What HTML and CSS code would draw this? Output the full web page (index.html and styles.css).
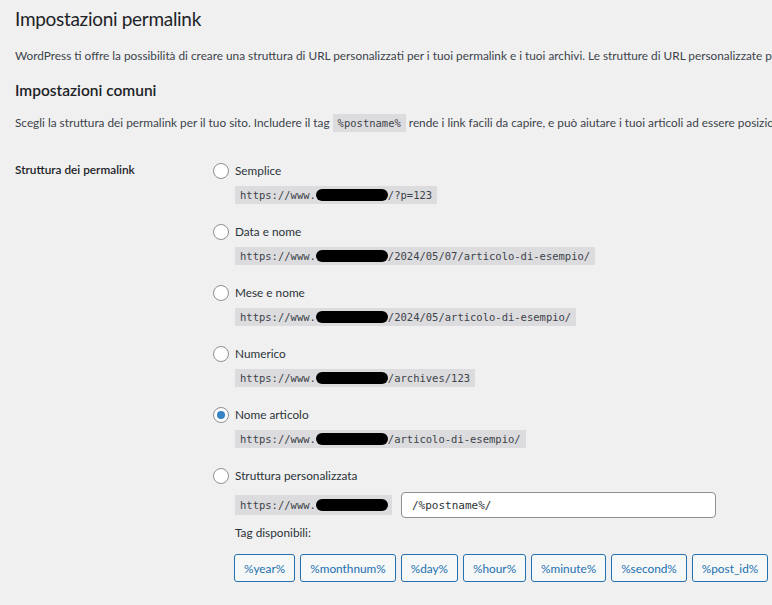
FILE: index.html
```html
<!DOCTYPE html>
<html lang="it">
<head>
    <meta charset="UTF-8">
    <meta name="viewport" content="width=device-width, initial-scale=1.0">
    <title>Impostazioni permalink</title>
    <link rel="stylesheet" href="styles.css">
</head>
<body>
    <div class="wrap">
        <h1>Impostazioni permalink</h1>
        <p class="intro">WordPress ti offre la possibilità di creare una struttura di URL personalizzati per i tuoi permalink e i tuoi archivi. Le strutture di URL personalizzate possono migliorare l'estetica, l'usabilità e la compatibilità dei tuoi link.</p>

        <h2>Impostazioni comuni</h2>
        <p class="lead">Scegli la struttura dei permalink per il tuo sito. Includere il tag <code>%postname%</code> rende i link facili da capire, e può aiutare i tuoi articoli ad essere posizionati meglio nei motori di ricerca.</p>

        <div class="form-row">
            <div class="row-title">Struttura dei permalink</div>
            <div class="options">
                <div class="option">
                    <label class="choice"><span class="radio"></span>Semplice</label>
                    <code class="sample">https://www.<span class="mask"></span>/?p=123</code>
                </div>
                <div class="option">
                    <label class="choice"><span class="radio"></span>Data e nome</label>
                    <code class="sample">https://www.<span class="mask"></span>/2024/05/07/articolo-di-esempio/</code>
                </div>
                <div class="option">
                    <label class="choice"><span class="radio"></span>Mese e nome</label>
                    <code class="sample">https://www.<span class="mask"></span>/2024/05/articolo-di-esempio/</code>
                </div>
                <div class="option">
                    <label class="choice"><span class="radio"></span>Numerico</label>
                    <code class="sample">https://www.<span class="mask"></span>/archives/123</code>
                </div>
                <div class="option">
                    <label class="choice"><span class="radio checked"></span>Nome articolo</label>
                    <code class="sample">https://www.<span class="mask"></span>/articolo-di-esempio/</code>
                </div>
                <div class="option custom">
                    <label class="choice"><span class="radio"></span>Struttura personalizzata</label>
                    <div class="custom-row">
                        <code class="sample">https://www.<span class="mask"></span></code>
                        <input class="structure" type="text" value="/%postname%/">
                    </div>
                    <div class="tags-label">Tag disponibili:</div>
                    <div class="tags">
                        <button type="button">%year%</button>
                        <button type="button">%monthnum%</button>
                        <button type="button">%day%</button>
                        <button type="button">%hour%</button>
                        <button type="button">%minute%</button>
                        <button type="button">%second%</button>
                        <button type="button">%post_id%</button>
                    </div>
                </div>
            </div>
        </div>
    </div>
</body>
</html>
```

FILE: styles.css
```css
body {
    margin: 0;
    background: #f0f0f1;
    color: #3c434a;
    font-family: Lato, "Open Sans", sans-serif;
    font-size: 11.8px;
    line-height: 20px;
    overflow: hidden;
}
.wrap {
    padding-left: 15px;
    white-space: nowrap;
}
h1 {
    margin: 0;
    padding-top: 4px;
    font-size: 19px;
    font-weight: 400;
    letter-spacing: -0.3px;
    line-height: 30px;
    color: #1d2327;
}
h2 {
    margin: 13px 0 0;
    font-size: 15.5px;
    font-weight: 600;
    line-height: 22px;
    color: #1d2327;
}
p {
    margin: 0;
}
.intro {
    margin-top: 12px;
}
.lead {
    margin-top: 12px;
}
code {
    font-family: "DejaVu Sans Mono", monospace;
    font-size: 10.5px;
    line-height: 12px;
    background: #dcdcde;
    color: #3c434a;
    padding: 3px 5px;
}
.form-row {
    display: flex;
    margin-top: 27px;
}
.row-title {
    width: 198px;
    flex: none;
    font-weight: 600;
    color: #1d2327;
}
.options {
    padding-top: 1px;
}
.option {
    margin-bottom: 18px;
}
.choice {
    display: flex;
    align-items: center;
    height: 20px;
    color: #2c3338;
}
.radio {
    width: 14px;
    height: 14px;
    border: 1px solid #8c8f94;
    border-radius: 50%;
    background: #fff;
    margin-right: 6px;
    display: flex;
    align-items: center;
    justify-content: center;
}
.radio.checked::after {
    content: "";
    width: 8px;
    height: 8px;
    border-radius: 50%;
    background: #3582c4;
}
.sample {
    display: block;
    width: fit-content;
    margin: 5px 0 0 22px;
}
.mask {
    display: inline-block;
    width: 72px;
    height: 12px;
    background: #000;
    border-radius: 7px;
    vertical-align: top;
}
.custom-row {
    display: flex;
    align-items: center;
    margin: 6px 0 0 22px;
}
.custom-row .sample {
    margin: 0;
    width: 147px;
    padding: 4px 5px;
}
.structure {
    margin-left: 9px;
    width: 315px;
    height: 26px;
    box-sizing: border-box;
    border: 1px solid #8c8f94;
    border-radius: 4px;
    padding: 0 10px;
    font-family: "DejaVu Sans Mono", monospace;
    font-size: 11px;
    color: #2c3338;
    background: #fff;
}
.tags-label {
    margin: 5px 0 0 22px;
    color: #2c3338;
}
.tags {
    display: flex;
    gap: 5px;
    margin: 11px 0 0 21px;
}
.tags button {
    height: 28px;
    padding: 0 9px;
    font-family: inherit;
    font-size: 11.8px;
    color: #2271b1;
    background: #f6f7f7;
    border: 1px solid #2271b1;
    border-radius: 3px;
}
```
